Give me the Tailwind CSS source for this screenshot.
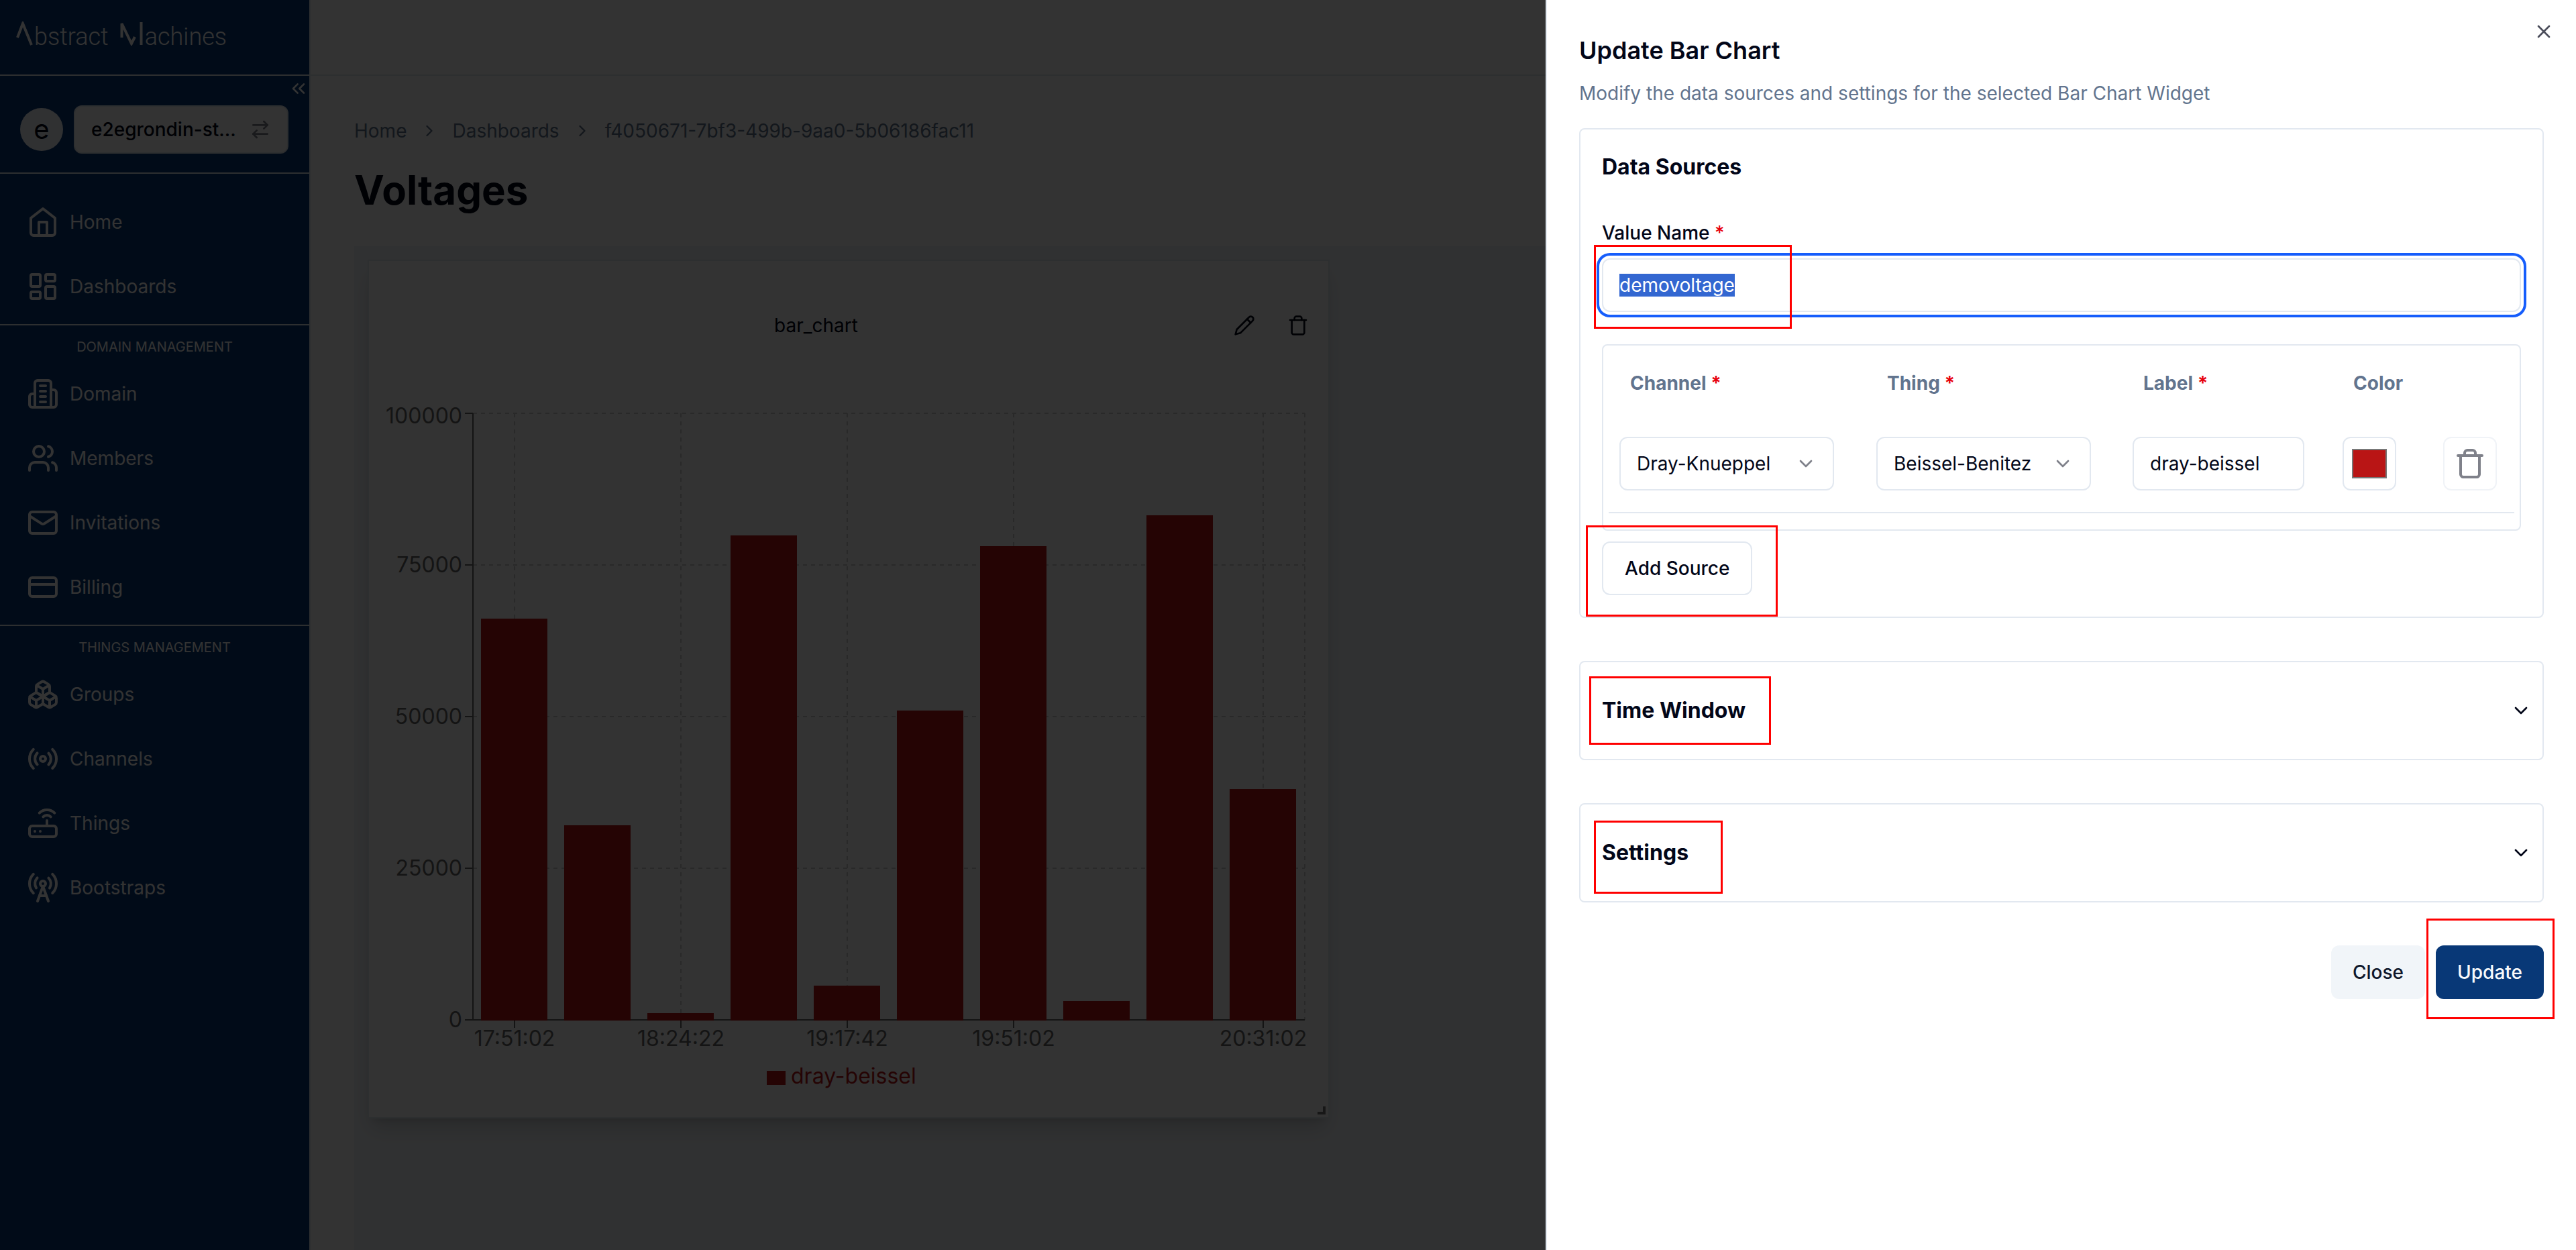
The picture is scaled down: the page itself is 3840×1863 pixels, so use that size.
<!DOCTYPE html>
<html lang="en">
<head>
<meta charset="utf-8">
<title>Voltages - Update Bar Chart</title>
<script src="https://cdn.jsdelivr.net/npm/@tailwindcss/browser@4"></script>
</head>
<body class="font-['Inter',sans-serif] text-[28px] leading-10 text-slate-950 bg-white">
<div class="flex min-h-screen">

  <!-- Sidebar -->
  <aside class="w-[463px] shrink-0 border-r-2 border-slate-200 bg-[#083877] text-white">
    <div class="flex h-[113px] items-start border-b-2 border-slate-200 pt-8 pl-6">
      <svg class="h-9 w-[27px]" viewBox="0 0 27 36" fill="none" stroke="currentColor" stroke-width="4"><path d="M2 24 L10 3 L23 35"/></svg>
      <span class="font-['Roboto',sans-serif] text-[36px] leading-[46px] font-light">bstract</span>
      <svg class="ml-4 h-9 w-[38px]" viewBox="0 0 38 36" fill="none" stroke="currentColor" stroke-width="4"><path d="M3.500 24 V3 L18 33 L23 23"/><path d="M32.500 1 V35"/></svg>
      <span class="font-['Roboto',sans-serif] text-[36px] leading-[46px] font-light">achines</span>
    </div>

    <div class="relative flex h-[146px] items-start gap-4 border-b-2 border-slate-200 pt-11 pl-[30px]">
      <button type="button" aria-label="Collapse sidebar" class="absolute top-[3px] right-0"><svg class="size-8" viewBox="0 0 24 24" fill="none" stroke="currentColor" stroke-width="2" stroke-linecap="round" stroke-linejoin="round"><path d="m11 17-5-5 5-5"/><path d="m18 17-5-5 5-5"/></svg></button>
      <span class="mt-1 flex size-16 items-center justify-center rounded-full bg-slate-100 text-[40px] text-slate-950">e</span>
      <button type="button" class="flex h-[72px] w-80 items-center justify-between rounded-xl border-2 border-slate-200 bg-white px-6 font-medium text-slate-950">
        <span>e2egrondin-st...</span>
        <svg class="size-8 opacity-50" viewBox="0 0 24 24" fill="none" stroke="currentColor" stroke-width="2" stroke-linecap="round" stroke-linejoin="round"><path d="m16 3 4 4-4 4"/><path d="M20 7H4"/><path d="m8 21-4-4 4-4"/><path d="M4 17h16"/></svg>
      </button>
    </div>

    <nav>
      <div class="border-b-2 border-slate-200 pt-6 pb-2">
        <a href="#" class="flex h-24 items-center gap-4 pl-10"><svg class="size-12" viewBox="0 0 24 24" fill="none" stroke="currentColor" stroke-width="2" stroke-linecap="round" stroke-linejoin="round"><path d="m3 9 9-7 9 7v11a2 2 0 0 1-2 2H5a2 2 0 0 1-2-2z"/><path d="M9 22V12h6v10"/></svg>Home</a>
        <a href="#" class="flex h-24 items-center gap-4 pl-10"><svg class="size-12" viewBox="0 0 24 24" fill="none" stroke="currentColor" stroke-width="2" stroke-linecap="round" stroke-linejoin="round"><rect width="7" height="9" x="3" y="3" rx="1"/><rect width="7" height="5" x="14" y="3" rx="1"/><rect width="7" height="9" x="14" y="12" rx="1"/><rect width="7" height="5" x="3" y="16" rx="1"/></svg>Dashboards</a>
      </div>
      <div class="border-b-2 border-slate-200 pb-2">
        <h2 class="h-[54px] pt-3 text-center text-[20px]">DOMAIN MANAGEMENT</h2>
        <a href="#" class="flex h-24 items-center gap-4 pl-10"><svg class="size-12" viewBox="0 0 24 24" fill="none" stroke="currentColor" stroke-width="2" stroke-linecap="round" stroke-linejoin="round"><path d="M6 22V4a2 2 0 0 1 2-2h8a2 2 0 0 1 2 2v18Z"/><path d="M6 12H4a2 2 0 0 0-2 2v6a2 2 0 0 0 2 2h2"/><path d="M18 9h2a2 2 0 0 1 2 2v9a2 2 0 0 1-2 2h-2"/><path d="M10 6h4"/><path d="M10 10h4"/><path d="M10 14h4"/><path d="M10 18h4"/></svg>Domain</a>
        <a href="#" class="flex h-24 items-center gap-4 pl-10"><svg class="size-12" viewBox="0 0 24 24" fill="none" stroke="currentColor" stroke-width="2" stroke-linecap="round" stroke-linejoin="round"><path d="M16 21v-2a4 4 0 0 0-4-4H6a4 4 0 0 0-4 4v2"/><circle cx="9" cy="7" r="4"/><path d="M22 21v-2a4 4 0 0 0-3-3.870"/><path d="M16 3.130a4 4 0 0 1 0 7.750"/></svg>Members</a>
        <a href="#" class="flex h-24 items-center gap-4 pl-10"><svg class="size-12" viewBox="0 0 24 24" fill="none" stroke="currentColor" stroke-width="2" stroke-linecap="round" stroke-linejoin="round"><rect width="20" height="16" x="2" y="4" rx="2"/><path d="m22 7-8.970 5.700a1.940 1.940 0 0 1-2.060 0L2 7"/></svg>Invitations</a>
        <a href="#" class="flex h-24 items-center gap-4 pl-10"><svg class="size-12" viewBox="0 0 24 24" fill="none" stroke="currentColor" stroke-width="2" stroke-linecap="round" stroke-linejoin="round"><rect width="20" height="14" x="2" y="5" rx="2"/><path d="M2 10h20"/></svg>Billing</a>
      </div>
      <div>
        <h2 class="h-[54px] pt-3 text-center text-[20px]">THINGS MANAGEMENT</h2>
        <a href="#" class="flex h-24 items-center gap-4 pl-10"><svg class="size-12" viewBox="0 0 24 24" fill="none" stroke="currentColor" stroke-width="2" stroke-linecap="round" stroke-linejoin="round"><path d="M2.970 12.920A2 2 0 0 0 2 14.630v3.240a2 2 0 0 0 .970 1.710l3 1.800a2 2 0 0 0 2.060 0L12 19v-5.500l-5-3-4.030 2.420Z"/><path d="m7 16.500-4.740-2.850"/><path d="m7 16.500 5-3"/><path d="M7 16.500v5.170"/><path d="M12 13.500V19l3.970 2.380a2 2 0 0 0 2.060 0l3-1.800a2 2 0 0 0 .970-1.710v-3.240a2 2 0 0 0-.970-1.710L17 10.500l-5 3Z"/><path d="m17 16.500-5-3"/><path d="m17 16.500 4.740-2.850"/><path d="M17 16.500v5.170"/><path d="M7.970 4.420A2 2 0 0 0 7 6.130v4.370l5 3 5-3V6.130a2 2 0 0 0-.970-1.710l-3-1.800a2 2 0 0 0-2.060 0l-3 1.800Z"/><path d="M12 8 7.260 5.150"/><path d="m12 8 4.740-2.850"/><path d="M12 13.500V8"/></svg>Groups</a>
        <a href="#" class="flex h-24 items-center gap-4 pl-10"><svg class="size-12" viewBox="0 0 24 24" fill="none" stroke="currentColor" stroke-width="2" stroke-linecap="round" stroke-linejoin="round"><path d="M4.900 19.100C1 15.200 1 8.800 4.900 4.900"/><path d="M7.800 16.200c-2.300-2.300-2.300-6.100 0-8.500"/><circle cx="12" cy="12" r="2"/><path d="M16.200 7.800c2.300 2.300 2.300 6.100 0 8.500"/><path d="M19.100 4.900C23 8.800 23 15.100 19.100 19"/></svg>Channels</a>
        <a href="#" class="flex h-24 items-center gap-4 pl-10"><svg class="size-12" viewBox="0 0 24 24" fill="none" stroke="currentColor" stroke-width="2" stroke-linecap="round" stroke-linejoin="round"><rect width="20" height="8" x="2" y="14" rx="2"/><path d="M6.010 18H6"/><path d="M10.010 18H10"/><path d="M15 10v4"/><path d="M17.840 7.170a4 4 0 0 0-5.660 0"/><path d="M20.660 4.340a8 8 0 0 0-11.310 0"/></svg>Things</a>
        <a href="#" class="flex h-24 items-center gap-4 pl-10"><svg class="size-12" viewBox="0 0 24 24" fill="none" stroke="currentColor" stroke-width="2" stroke-linecap="round" stroke-linejoin="round"><path d="M4.900 16.100C1 12.200 1 5.800 4.900 1.900"/><path d="M7.800 4.700a6.140 6.140 0 0 0-.800 7.500"/><circle cx="12" cy="9" r="2"/><path d="M16.200 4.800c2 2 2.260 5.110.800 7.470"/><path d="M19.100 1.900a9.960 9.960 0 0 1 0 14.100"/><path d="M9.500 18h5"/><path d="m8 22 4-11 4 11"/></svg>Bootstraps</a>
      </div>
    </nav>
  </aside>

  <!-- Dashboard -->
  <div class="flex min-w-0 flex-1 flex-col">
    <header class="h-[113px] border-b-2 border-slate-200"></header>
    <main class="flex flex-1 flex-col px-[65px] pt-[62px]">
      <nav aria-label="Breadcrumb" class="flex items-center gap-5 text-slate-500">
        <a href="#">Home</a>
        <svg class="size-7" viewBox="0 0 24 24" fill="none" stroke="currentColor" stroke-width="2" stroke-linecap="round" stroke-linejoin="round"><path d="m9 18 6-6-6-6"/></svg>
        <a href="#">Dashboards</a>
        <svg class="size-7" viewBox="0 0 24 24" fill="none" stroke="currentColor" stroke-width="2" stroke-linecap="round" stroke-linejoin="round"><path d="m9 18 6-6-6-6"/></svg>
        <span>f4050671-7bf3-499b-9aa0-5b06186fac11</span>
      </nav>
      <h1 class="mt-8 text-[60px] leading-[72px] font-bold">Voltages</h1>
      <div class="mt-12 flex-1 bg-slate-100 p-5">
        <section class="relative w-[1434px] border-2 border-slate-200 bg-white shadow-[0_20px_30px_-6px_rgb(0_0_0/0.15),0_8px_12px_-8px_rgb(0_0_0/0.15)]">
          <div class="flex h-48 items-center pr-[29px] pl-12">
            <h2 class="flex-1 text-center">bar_chart</h2>
            <div class="flex gap-12 pl-1">
              <button type="button" aria-label="Edit chart"><svg class="size-8" viewBox="0 0 24 24" fill="none" stroke="currentColor" stroke-width="2" stroke-linecap="round" stroke-linejoin="round"><path d="M17 3a2.850 2.830 0 1 1 4 4L7.500 20.500 2 22l1.500-5.500Z"/><path d="m15 5 4 4"/></svg></button>
              <button type="button" aria-label="Delete chart"><svg class="size-8" viewBox="0 0 24 24" fill="none" stroke="currentColor" stroke-width="2" stroke-linecap="round" stroke-linejoin="round"><path d="M3 6h18"/><path d="M19 6v14c0 1-1 2-2 2H7c-1 0-2-1-2-2V6"/><path d="M8 6V4c0-1 1-2 2-2h4c1 0 2 1 2 2v2"/></svg></button>
            </div>
          </div>
          <svg class="block w-full text-[32px]" viewBox="0 0 1430 1084" fill="#666">
            <g stroke="#ccc" stroke-width="2" stroke-dasharray="6 6" fill="none">
              <path d="M155 35H1395"/><path d="M155 261H1395"/><path d="M155 487H1395"/><path d="M155 713H1395"/>
              <path d="M217 35V939"/><path d="M465 35V939"/><path d="M713 35V939"/><path d="M961 35V939"/><path d="M1333 35V939"/><path d="M1395 35V939"/>
            </g>
            <path stroke="#666" stroke-width="2" fill="none" d="M155 35V939M143 939H1395M143 35H155M143 261H155M143 487H155M143 713H155M217 939V951M465 939V951M713 939V951M961 939V951M1333 939V951"/>
            <g fill="#b91515">
              <rect x="167" y="341" width="99" height="599"/>
              <rect x="291" y="649" width="99" height="291"/>
              <rect x="415" y="929" width="99" height="11"/>
              <rect x="539" y="217" width="99" height="723"/>
              <rect x="663" y="888" width="99" height="52"/>
              <rect x="787" y="478" width="99" height="462"/>
              <rect x="911" y="233" width="99" height="707"/>
              <rect x="1035" y="911" width="99" height="29"/>
              <rect x="1159" y="187" width="99" height="753"/>
              <rect x="1283" y="595" width="99" height="345"/>
              <rect x="593" y="1015" width="28" height="21"/>
              <text x="629" y="1034">dray-beissel</text>
            </g>
            <g text-anchor="end">
              <text x="139" y="50">100000</text><text x="139" y="272">75000</text><text x="139" y="498">50000</text><text x="139" y="724">25000</text><text x="139" y="950">0</text>
            </g>
            <g text-anchor="middle">
              <text x="217" y="978">17:51:02</text><text x="465" y="978">18:24:22</text><text x="713" y="978">19:17:42</text><text x="961" y="978">19:51:02</text><text x="1333" y="978">20:31:02</text>
            </g>
          </svg>
          <span class="absolute right-1 bottom-1 size-3 border-r-4 border-b-4 border-black/55"></span>
        </section>
      </div>
    </main>
  </div>
</div>

<div class="fixed inset-0 bg-black/80"></div>

<!-- Update sheet -->
<div role="dialog" aria-labelledby="sheet-title" class="fixed inset-y-0 right-0 w-[40%] border-l-2 border-slate-200 bg-white px-12 pt-[47px]">
  <button type="button" aria-label="Close" class="absolute top-[31px] right-8 opacity-70"><svg class="size-8" viewBox="0 0 24 24" fill="none" stroke="currentColor" stroke-width="2" stroke-linecap="round" stroke-linejoin="round"><path d="M18 6 6 18"/><path d="m6 6 12 12"/></svg></button>
  <h2 id="sheet-title" class="text-[36px] leading-[56px] font-semibold">Update Bar Chart</h2>
  <p class="mt-4 text-slate-500">Modify the data sources and settings for the selected Bar Chart Widget</p>

  <form class="mt-8 flex flex-col gap-16">
    <section class="rounded-lg border-2 border-slate-200 p-8">
      <h3 class="text-[32px] leading-[48px] font-bold">Data Sources</h3>
      <label for="value-name" class="mt-[54px] block font-medium">Value Name <span class="text-red-600">*</span></label>
      <div class="relative mt-[18px]">
        <input id="value-name" type="text" value="demovoltage" autofocus class="block h-20 w-full rounded-xl border-2 border-slate-200 bg-white px-6 ring-4 ring-blue-600 ring-offset-4 outline-none selection:bg-[#3367d1] selection:text-white">
        <span class="pointer-events-none absolute -top-5 -left-3 h-[125px] w-[295px] border-3 border-[#ff0000]"></span>
      </div>

      <div class="mt-12 rounded-lg border-2 border-slate-200 px-2 pt-2 pb-6">
        <table class="w-full table-fixed text-left">
          <colgroup><col class="w-[383px]"><col class="w-[382px]"><col class="w-[313px]"><col class="w-[150px]"><col></colgroup>
          <thead class="text-slate-500">
            <tr class="h-24">
              <th class="px-8 font-bold">Channel <span class="text-red-600">*</span></th>
              <th class="px-8 font-bold">Thing <span class="text-red-600">*</span></th>
              <th class="px-8 font-bold">Label <span class="text-red-600">*</span></th>
              <th class="px-8 font-bold">Color</th>
              <th></th>
            </tr>
          </thead>
          <tbody>
            <tr class="border-b-2 border-slate-200">
              <td class="px-4 py-8">
                <div class="relative w-80">
                  <select aria-label="Channel" class="block h-20 w-full appearance-none rounded-xl border-2 border-slate-200 bg-white px-6"><option>Dray-Knueppel</option></select>
                  <svg class="pointer-events-none absolute top-6 right-[26px] size-8 opacity-50" viewBox="0 0 24 24" fill="none" stroke="currentColor" stroke-width="2" stroke-linecap="round" stroke-linejoin="round"><path d="m6 9 6 6 6-6"/></svg>
                </div>
              </td>
              <td class="px-4 py-8">
                <div class="relative w-80">
                  <select aria-label="Thing" class="block h-20 w-full appearance-none rounded-xl border-2 border-slate-200 bg-white px-6"><option>Beissel-Benitez</option></select>
                  <svg class="pointer-events-none absolute top-6 right-[26px] size-8 opacity-50" viewBox="0 0 24 24" fill="none" stroke="currentColor" stroke-width="2" stroke-linecap="round" stroke-linejoin="round"><path d="m6 9 6 6 6-6"/></svg>
                </div>
              </td>
              <td class="px-4 py-8"><input type="text" aria-label="Label" value="dray-beissel" class="block h-20 w-64 rounded-xl border-2 border-slate-200 bg-white px-6"></td>
              <td class="px-4 py-8"><input type="color" aria-label="Color" value="#b91515" class="block size-20 rounded-xl border-2 border-slate-200 bg-white px-3 py-4 [&::-webkit-color-swatch-wrapper]:p-0 [&::-webkit-color-swatch]:rounded-none [&::-webkit-color-swatch]:border-2 [&::-webkit-color-swatch]:border-[#777777]"></td>
              <td class="py-8 pl-4"><button type="button" aria-label="Remove source" class="flex size-20 items-center justify-center rounded-xl border-2 border-slate-200 opacity-50"><svg class="size-12" viewBox="0 0 24 24" fill="none" stroke="currentColor" stroke-width="2" stroke-linecap="round" stroke-linejoin="round"><path d="M3 6h18"/><path d="M19 6v14c0 1-1 2-2 2H7c-1 0-2-1-2-2V6"/><path d="M8 6V4c0-1 1-2 2-2h4c1 0 2 1 2 2v2"/></svg></button></td>
            </tr>
          </tbody>
        </table>
      </div>

      <div class="relative mt-4 flex">
        <button type="button" class="h-20 rounded-xl border-2 border-slate-200 px-8 font-medium">Add Source</button>
        <span class="pointer-events-none absolute -top-6 -left-6 h-[136px] w-[286px] border-3 border-[#ff0000]"></span>
      </div>
    </section>

    <section class="rounded-lg border-2 border-slate-200">
      <button type="button" class="relative flex w-full items-center justify-between py-12 pr-4 pl-8 text-[32px] leading-[48px] font-bold">Time Window
        <svg class="size-8" viewBox="0 0 24 24" fill="none" stroke="currentColor" stroke-width="2" stroke-linecap="round" stroke-linejoin="round"><path d="m6 9 6 6 6-6"/></svg>
        <span class="pointer-events-none absolute top-[21px] left-[13px] h-[102px] w-[271px] border-3 border-[#ff0000]"></span>
      </button>
    </section>

    <section class="rounded-lg border-2 border-slate-200">
      <button type="button" class="relative flex w-full items-center justify-between py-12 pr-4 pl-8 text-[32px] leading-[48px] font-bold">Settings
        <svg class="size-8" viewBox="0 0 24 24" fill="none" stroke="currentColor" stroke-width="2" stroke-linecap="round" stroke-linejoin="round"><path d="m6 9 6 6 6-6"/></svg>
        <span class="pointer-events-none absolute top-6 left-5 h-[109px] w-48 border-3 border-[#ff0000]"></span>
      </button>
    </section>

    <div class="flex justify-end gap-4 font-medium">
      <button type="button" class="h-20 rounded-xl bg-slate-100 px-8 text-slate-900">Close</button>
      <div class="relative">
        <button type="submit" class="h-20 rounded-xl bg-[#083877] px-8 text-slate-50">Update</button>
        <span class="pointer-events-none absolute -top-10 -right-4 h-[150px] w-[191px] border-3 border-[#ff0000]"></span>
      </div>
    </div>
  </form>
</div>
<script>
  const valueName = document.getElementById('value-name');
  valueName.focus();
  valueName.select();
</script>
</body>
</html>
